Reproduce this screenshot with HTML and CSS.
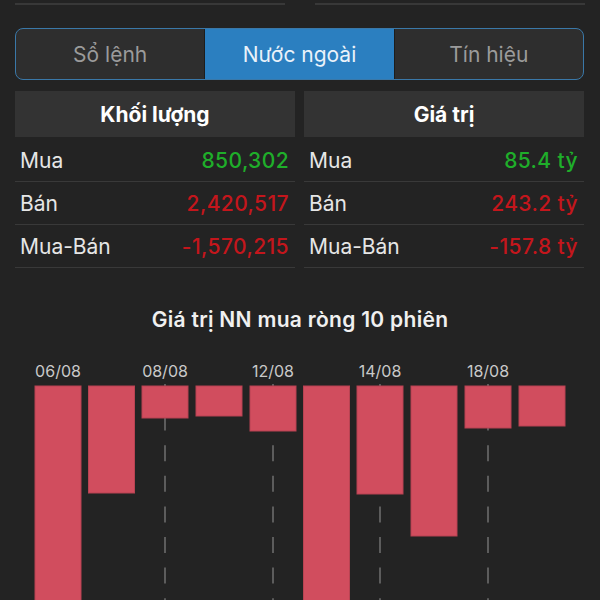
FILE: index.html
```html
<!DOCTYPE html>
<html lang="vi">
<head>
    <meta charset="UTF-8">
    <title>Nước ngoài</title>
    <link rel="stylesheet" href="styles.css">
</head>
<body>
    <div class="top-lines">
        <div class="line"></div>
        <div class="line"></div>
    </div>

    <div class="tabs">
        <div class="tab">Sổ lệnh</div>
        <div class="tab active">Nước ngoài</div>
        <div class="tab">Tín hiệu</div>
    </div>

    <div class="summary">
        <div class="col">
            <div class="col-head">Khối lượng</div>
            <div class="row"><span>Mua</span><span class="up">850,302</span></div>
            <div class="row"><span>Bán</span><span class="down">2,420,517</span></div>
            <div class="row"><span>Mua-Bán</span><span class="down">-1,570,215</span></div>
        </div>
        <div class="col">
            <div class="col-head">Giá trị</div>
            <div class="row"><span>Mua</span><span class="up">85.4 tỷ</span></div>
            <div class="row"><span>Bán</span><span class="down">243.2 tỷ</span></div>
            <div class="row"><span>Mua-Bán</span><span class="down">-157.8 tỷ</span></div>
        </div>
    </div>

    <div class="chart-title">Giá trị NN mua ròng 10 phiên</div>

    <svg class="chart" width="600" height="268" viewBox="0 0 600 268">
        <!-- đường lưới -->
        <line class="grid" x1="165" y1="52" x2="165" y2="268"/>
        <line class="grid" x1="273" y1="52" x2="273" y2="268"/>
        <line class="grid" x1="380" y1="52" x2="380" y2="268"/>
        <line class="grid" x1="488" y1="52" x2="488" y2="268"/>

        <text class="date" x="58" y="45">06/08</text>
        <text class="date" x="165" y="45">08/08</text>
        <text class="date" x="273" y="45">12/08</text>
        <text class="date" x="380" y="45">14/08</text>
        <text class="date" x="488" y="45">18/08</text>

        <rect class="bar" x="35" y="54" width="46" height="220"/>
        <rect class="bar" x="88.5" y="54" width="46" height="107"/>
        <rect class="bar" x="142" y="54" width="46" height="32"/>
        <rect class="bar" x="196" y="54" width="46" height="30"/>
        <rect class="bar" x="250" y="54" width="46" height="45"/>
        <rect class="bar" x="303.5" y="54" width="46" height="220"/>
        <rect class="bar" x="357" y="54" width="46" height="108"/>
        <rect class="bar" x="411" y="54" width="46" height="150"/>
        <rect class="bar" x="465" y="54" width="46" height="42"/>
        <rect class="bar" x="519" y="54" width="46" height="40"/>
    </svg>
</body>
</html>
```

FILE: styles.css
```css
body {
    margin: 0;
    background-color: #232323;
    color: #eeeeee;
    font-family: Inter, "Noto Sans", sans-serif;
    overflow: hidden;
}

/* Đường kẻ phía trên */
.top-lines {
    display: flex;
    gap: 30px;
    padding: 3px 15px 0 15px;
}
.top-lines .line {
    flex: 1;
    height: 2px;
    background-color: #383838;
}

/* Thanh tab */
.tabs {
    display: flex;
    height: 52px;
    margin: 23px 16px 0 15px;
    border: 1.5px solid #3a78a8;
    border-radius: 8px;
    overflow: hidden;
    box-sizing: border-box;
    background-color: #2e2e2e;
}
.tab {
    flex: 1;
    display: flex;
    align-items: center;
    justify-content: center;
    font-size: 21px;
    color: #9b9b9b;
}
.tab.active {
    background-color: #2b7fc0;
    color: #eaf2fa;
    border-left: 1px solid #1d1d1d;
    border-right: 1px solid #1d1d1d;
}

/* Bảng tổng hợp */
.summary {
    display: grid;
    grid-template-columns: 1fr 1fr;
    gap: 9px;
    margin: 11px 16px 0 15px;
}
.col-head {
    height: 46px;
    display: flex;
    align-items: center;
    justify-content: center;
    background-color: #333333;
    font-size: 21px;
    font-weight: 700;
    color: #ffffff;
    margin-bottom: 2px;
}
.row {
    height: 42px;
    display: flex;
    align-items: center;
    justify-content: space-between;
    padding: 0 6px 0 5px;
    border-bottom: 1px solid #393939;
    font-size: 21px;
    color: #e6e6e6;
}
.up,
.down {
    font-weight: 500;
    letter-spacing: 0.4px;
}
.up {
    color: #1fae2a;
}
.down {
    color: #c4161c;
}

/* Biểu đồ */
.chart-title {
    margin-top: 40px;
    height: 24px;
    line-height: 24px;
    text-align: center;
    font-size: 21px;
    font-weight: 600;
    letter-spacing: 0.3px;
    color: #f0f0f0;
}
.chart {
    display: block;
}
.chart .grid {
    stroke: #707070;
    stroke-width: 1.5;
    stroke-dasharray: 16 14.6;
}
.chart .date {
    fill: #c9c9c9;
    font-size: 16px;
    text-anchor: middle;
}
.chart .bar {
    fill: #d14d5e;
    stroke: #b84352;
    stroke-width: 1;
}
```
